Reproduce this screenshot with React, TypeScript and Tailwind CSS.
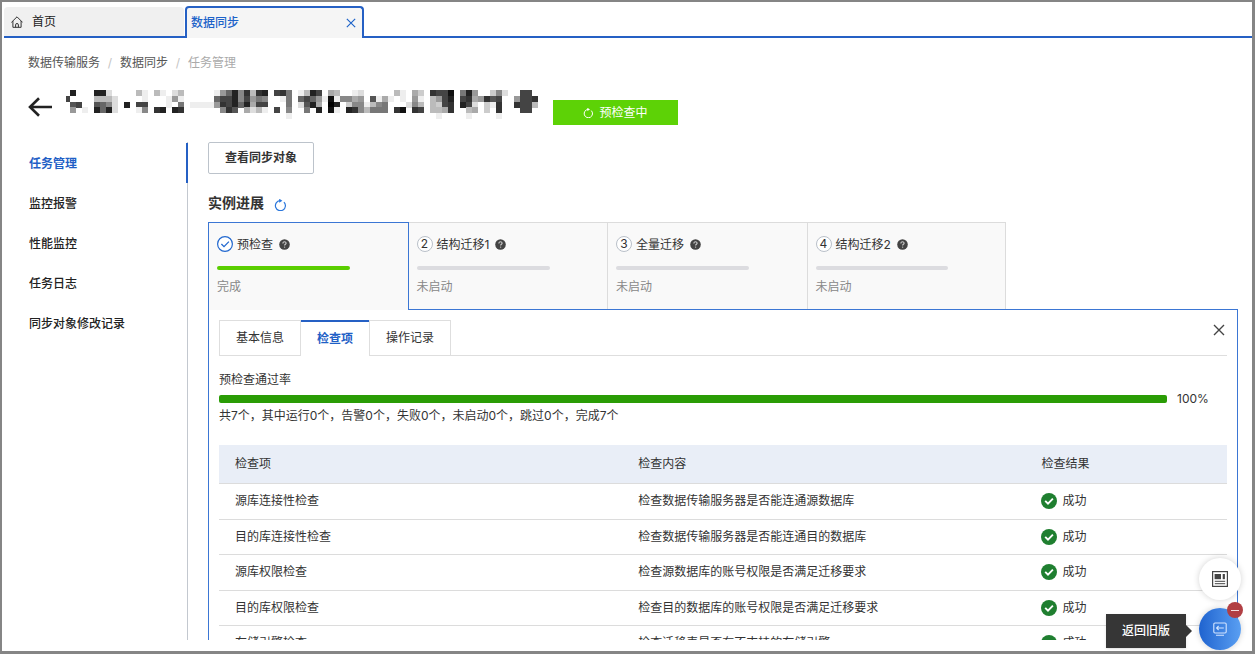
import React from "react";

/* Grey level of each block, one string per column (hex, top to bottom; f is blank). */
const MASK_COLUMNS: string[] =
  "f4fff 2f59f ff4ff fffef fffff 2b52f 2b66f db82f fdddf fffff ff2ff fffff bf4ef ee48f fffff bff3f eff2f feeff d9f2f be73f fffff ffeff ffeff ffeff ffeff e69ff 9438f 6443f 2225f 886ff 342af b9adf 374bf 284ef fffff 4ff4f 3efff 7778e fffff e6dff b457f 262ff 49a2f fefff a101f be2ef f8fff f8c2f ea83f d988f ffebf f5b7f fe87f fa77f fefff bff3f eef1f ffdff a983f ceb4f fffff 3bbbf 49cbe 444af 1233f fffff 742ff 234be 9adaf f9fff f3ccf c5eff 8433e dffff fffff f93ff 4444f 4444f f3bff".split(
    " "
  );

const STEPS = [
  { title: "预检查", status: "完成", done: true },
  { title: "结构迁移1", status: "未启动", done: false },
  { title: "全量迁移", status: "未启动", done: false },
  { title: "结构迁移2", status: "未启动", done: false },
];

const STEP_BORDERS = [
  "relative z-10 -mr-px border-x border-[#3b76d4]",
  "border-l border-[#dcdcdc] border-l-transparent",
  "border-l border-[#dcdcdc]",
  "border-x border-[#dcdcdc]",
];

const CHECKS = [
  ["源库连接性检查", "检查数据传输服务器是否能连通源数据库"],
  ["目的库连接性检查", "检查数据传输服务器是否能连通目的数据库"],
  ["源库权限检查", "检查源数据库的账号权限是否满足迁移要求"],
  ["目的库权限检查", "检查目的数据库的账号权限是否满足迁移要求"],
  ["存储引擎检查", "检查迁移表是否有不支持的存储引擎"],
];

const NAV = ["任务管理", "监控报警", "性能监控", "任务日志", "同步对象修改记录"];

function MaskedTitle() {
  return (
    <svg
      className="h-[29px] w-[474px] shrink-0"
      viewBox="0 0 474 29"
      shapeRendering="crispEdges"
      aria-hidden="true"
    >
      {MASK_COLUMNS.map((col, x) =>
        col
          .split("")
          .map((level, y) =>
            level === "f" ? null : (
              <rect
                key={`${x}-${y}`}
                x={x * 6 - 2}
                y={Math.round(y * 5.75)}
                width={6}
                height={6}
                fill={`#${level}${level}${level}`}
              />
            )
          )
      )}
    </svg>
  );
}

function HelpIcon() {
  return (
    <svg className="size-[11px]" viewBox="0 0 11 11" aria-hidden="true">
      <circle cx="5.5" cy="5.5" r="5.3" fill="#444" />
      <path
        d="M3.9 4.4C3.9 3.3 4.7 2.8 5.5 2.8s1.6.5 1.6 1.4c0 1-1.5 1-1.5 2.2"
        fill="none"
        stroke="#ccc"
        strokeWidth="1.1"
      />
      <circle cx="5.6" cy="8.1" r=".7" fill="#ccc" />
    </svg>
  );
}

function RefreshIcon({ className }: { className: string }) {
  return (
    <svg className={className} viewBox="0 0 12 12" fill="none" stroke="currentColor" aria-hidden="true">
      <path d="M9.9 3.1A5 5 0 1 1 6 1.7" strokeWidth="1.2" />
      <path d="M5.2 -.3 8.4 1.7 5.2 3.7z" fill="currentColor" stroke="none" />
    </svg>
  );
}

function Success() {
  return (
    <span className="flex items-center gap-[5px]">
      <svg className="size-4" viewBox="0 0 16 16" aria-hidden="true">
        <circle cx="8" cy="8" r="8" fill="#1f7f30" />
        <path d="M4.2 7.8 7 10.6l4.9-4.9" fill="none" stroke="#fff" strokeWidth="1.9" />
      </svg>
      成功
    </span>
  );
}

function CloseIcon({ className }: { className: string }) {
  return (
    <svg className={className} viewBox="0 0 12 12" fill="none" stroke="currentColor" aria-hidden="true">
      <path d="M1 1 11 11M11 1 1 11" strokeWidth="1.4" />
    </svg>
  );
}

function TopTabs() {
  return (
    <div className="flex h-9 shrink-0 items-end border-b-2 border-[#2560c4] pt-1">
      <a href="#home" className="flex h-[29px] w-[180px] items-center gap-[9px] rounded-t-sm bg-[#f0f0f0] pl-[7px] text-[#222]">
        <svg className="size-3" viewBox="0 0 12 12" fill="none" stroke="#333" aria-hidden="true">
          <path d="M.4 6.4 6 .8l5.6 5.6M1.9 5v6.3h8.2V5" strokeWidth="1" strokeLinejoin="round" />
          <path d="M4.6 11.3V8.9a1.4 1.4 0 0 1 2.8 0v2.4" strokeWidth="1" />
        </svg>
        首页
      </a>
      <div className="-mb-0.5 ml-px flex h-8 w-[179px] items-center justify-between rounded-t border-2 border-b-0 border-[#2560c4] bg-[#f5f5f5] pr-[6px] pl-1 text-[#1d63c9]">
        <a href="#sync" className="font-medium">数据同步</a>
        <button type="button" aria-label="关闭标签">
          <CloseIcon className="block size-[10px]" />
        </button>
      </div>
    </div>
  );
}

function Steps() {
  return (
    <ol className="-mb-px grid h-[88px] w-[798px] max-w-full grid-cols-4">
      {STEPS.map((step, i) => (
        <li key={step.title} className={`${STEP_BORDERS[i]} border-t bg-[#f9f9f9] pt-[11px] pl-2`}>
          <div className="flex h-5 items-center gap-1 text-[#333]">
            {step.done ? (
              <svg className="size-4" viewBox="0 0 16 16" fill="#fff" stroke="#2268cf" aria-hidden="true">
                <circle cx="8" cy="8" r="7.4" strokeWidth="1.2" />
                <path d="M4.4 8 7 10.6l4.9-5" fill="none" strokeWidth="1.3" />
              </svg>
            ) : (
              <span className="flex size-4 items-center justify-center rounded-full border border-[#b9c0c9] bg-white leading-none">
                {i + 1}
              </span>
            )}
            <span className="mr-[2px] pt-[2px]">{step.title}</span>
            <HelpIcon />
          </div>
          <div className={`mt-3 h-1 w-[70%] rounded-full ${step.done ? "bg-[#5ace00]" : "bg-[#dcdce0]"}`} />
          <p className="mt-[7px] text-[#888]">{step.status}</p>
        </li>
      ))}
    </ol>
  );
}

function Panel() {
  return (
    <div className="relative border border-[#3b76d4] px-[10px] pt-[10px]">
      <div className="flex h-9 border-b border-[#dedede]" role="tablist">
        <button type="button" role="tab" aria-selected="false" className="border-x border-t border-[#dedede] px-4">
          基本信息
        </button>
        <button type="button" role="tab" aria-selected="true" className="-mb-px border-t-2 border-[#2560c4] bg-white px-4 font-bold text-[#1f5fc6]">
          检查项
        </button>
        <button type="button" role="tab" aria-selected="false" className="border-x border-t border-[#dedede] px-4">
          操作记录
        </button>
        <button type="button" aria-label="关闭" className="mt-1 mr-[2px] ml-auto self-start">
          <CloseIcon className="block size-3 text-[#444]" />
        </button>
      </div>

      <p className="mt-[14px]">预检查通过率</p>
      <div className="flex h-[18px] items-center gap-[10px]">
        <div className="h-2 flex-1 rounded-[2px] bg-[#2a9c05]" />
        <span className="w-[50px]">100%</span>
      </div>
      <p className="-mt-[2px]">共7个，其中运行0个，告警0个，失败0个，未启动0个，跳过0个，完成7个</p>

      <table className="mt-[19px] w-full table-fixed border-collapse text-left">
        <thead>
          <tr className="h-[38px] border-b border-[#dcdcdc] bg-[#e9eef7]">
            <th className="w-2/5 px-4 font-normal">检查项</th>
            <th className="w-2/5 px-4 font-normal">检查内容</th>
            <th className="w-1/5 px-4 font-normal">检查结果</th>
          </tr>
        </thead>
        <tbody>
          {CHECKS.map(([name, content]) => (
            <tr key={name} className="h-9 border-b border-[#dcdcdc] even:h-[35px]">
              <td className="px-4">{name}</td>
              <td className="px-4">{content}</td>
              <td className="px-4">
                <Success />
              </td>
            </tr>
          ))}
        </tbody>
      </table>
    </div>
  );
}

function FloatingActions() {
  return (
    <div className="absolute right-[11px] bottom-[1px] flex items-end gap-[13px]">
      <div className="relative mb-[2px] flex h-[34px] items-center bg-[#363636] px-4 font-medium text-white shadow" role="tooltip">
        返回旧版
        <svg className="absolute left-full h-3 w-[6px]" viewBox="0 0 6 12" aria-hidden="true">
          <path d="M0 0 6 6 0 12z" fill="#363636" />
        </svg>
      </div>
      <div className="flex flex-col gap-2">
        <button type="button" aria-label="文档" className="flex size-[42px] items-center justify-center rounded-full bg-white shadow-[0_0_6px_rgba(0,0,0,0.18)]">
          <svg className="size-4" viewBox="0 0 16 16" fill="none" stroke="#444" aria-hidden="true">
            <rect x=".6" y=".6" width="14.8" height="14.8" strokeWidth="1.2" />
            <rect x="2.6" y="3" width="6.4" height="5.2" fill="#444" stroke="none" />
            <path d="M11.8 3v5.2" strokeWidth="2.2" />
            <path d="M2.8 10.3h10.4M2.8 12.7h10.4" strokeWidth="1" />
          </svg>
        </button>
        <button type="button" aria-label="返回旧版" className="relative flex size-[42px] items-center justify-center rounded-full bg-linear-to-r from-[#1f63cf] to-[#5a9ff2] text-white shadow-[0_0_6px_rgba(0,0,0,0.18)]">
          <svg className="size-[14px]" viewBox="0 0 14 14" fill="none" stroke="#d5e6ff" aria-hidden="true">
            <rect x=".8" y="1" width="12.4" height="10" rx="1.2" strokeWidth="1.1" />
            <path d="M10.8 6H3.6M5.6 4 3.6 6l2 2M3 13.2h8" strokeWidth="1.1" />
          </svg>
          <span className="absolute -top-[6px] -right-[2px] flex size-4 items-center justify-center rounded-full bg-[#b13f44]">
            <span className="h-px w-2 bg-[#f5dede]" />
          </span>
        </button>
      </div>
    </div>
  );
}

export default function App() {
  return (
    <div className="relative flex h-screen flex-col overflow-hidden border-2 border-r-[3px] border-b-[3px] border-[#858585] bg-white pb-[11px] pl-[2px] font-['Inter','Noto_Sans_CJK_SC',sans-serif] text-xs leading-5 text-[#333]">
      <TopTabs />

      <div className="flex min-h-0 flex-1 flex-col overflow-hidden pl-6">
        <nav className="mt-[15px] flex text-[#555]" aria-label="面包屑">
          <a href="#dts">数据传输服务</a>
          <span className="w-5 text-center text-[#c4c4c4]">/</span>
          <a href="#sync">数据同步</a>
          <span className="w-5 text-center text-[#c4c4c4]">/</span>
          <span className="text-[#aaa]">任务管理</span>
        </nav>

        <header className="mt-[17px] flex h-[35px] shrink-0 items-start">
          <button type="button" aria-label="返回" className="mt-[7px] mr-[14px]">
            <svg className="block h-5 w-6" viewBox="0 0 24 20" fill="none" stroke="#222" strokeWidth="2.6" aria-hidden="true">
              <path d="M24 10H2M11 1.2 2 10l9 8.8" />
            </svg>
          </button>
          <MaskedTitle />
          <span className="mt-[10px] ml-[13px] flex h-[25px] w-[125px] items-center justify-center gap-[6px] bg-[#5dd206] text-white">
            <RefreshIcon className="size-[10px]" />
            预检查中
          </span>
        </header>

        <div className="mt-[17px] flex min-h-0 flex-1">
          <nav className="flex w-40 shrink-0 flex-col border-r border-[#c3c8cf] pt-px" aria-label="任务导航">
            {NAV.map((item, i) => (
              <a
                key={item}
                href={`#nav-${i}`}
                className={`flex h-10 shrink-0 items-center pt-[2px] pl-px ${
                  i === 0 ? "-mr-px border-r-2 border-[#2560c4] font-bold text-[#1f5fc6]" : "font-medium text-[#222]"
                }`}
              >
                {item}
              </a>
            ))}
          </nav>

          <main className="min-w-0 flex-1 overflow-hidden pr-[14px] pl-5">
            <button type="button" className="block h-8 rounded-[2px] border border-[#bcc3cb] px-4 font-bold text-[#333]">
              查看同步对象
            </button>
            <div className="mt-[19px] mb-[9px] flex h-5 items-center gap-[10px]">
              <h1 className="text-sm font-bold">实例进展</h1>
              <button type="button" aria-label="刷新" className="mt-1 text-[#2b77dc]">
                <RefreshIcon className="block size-3" />
              </button>
            </div>
            <Steps />
            <Panel />
          </main>
        </div>
      </div>
      <FloatingActions />
    </div>
  );
}
